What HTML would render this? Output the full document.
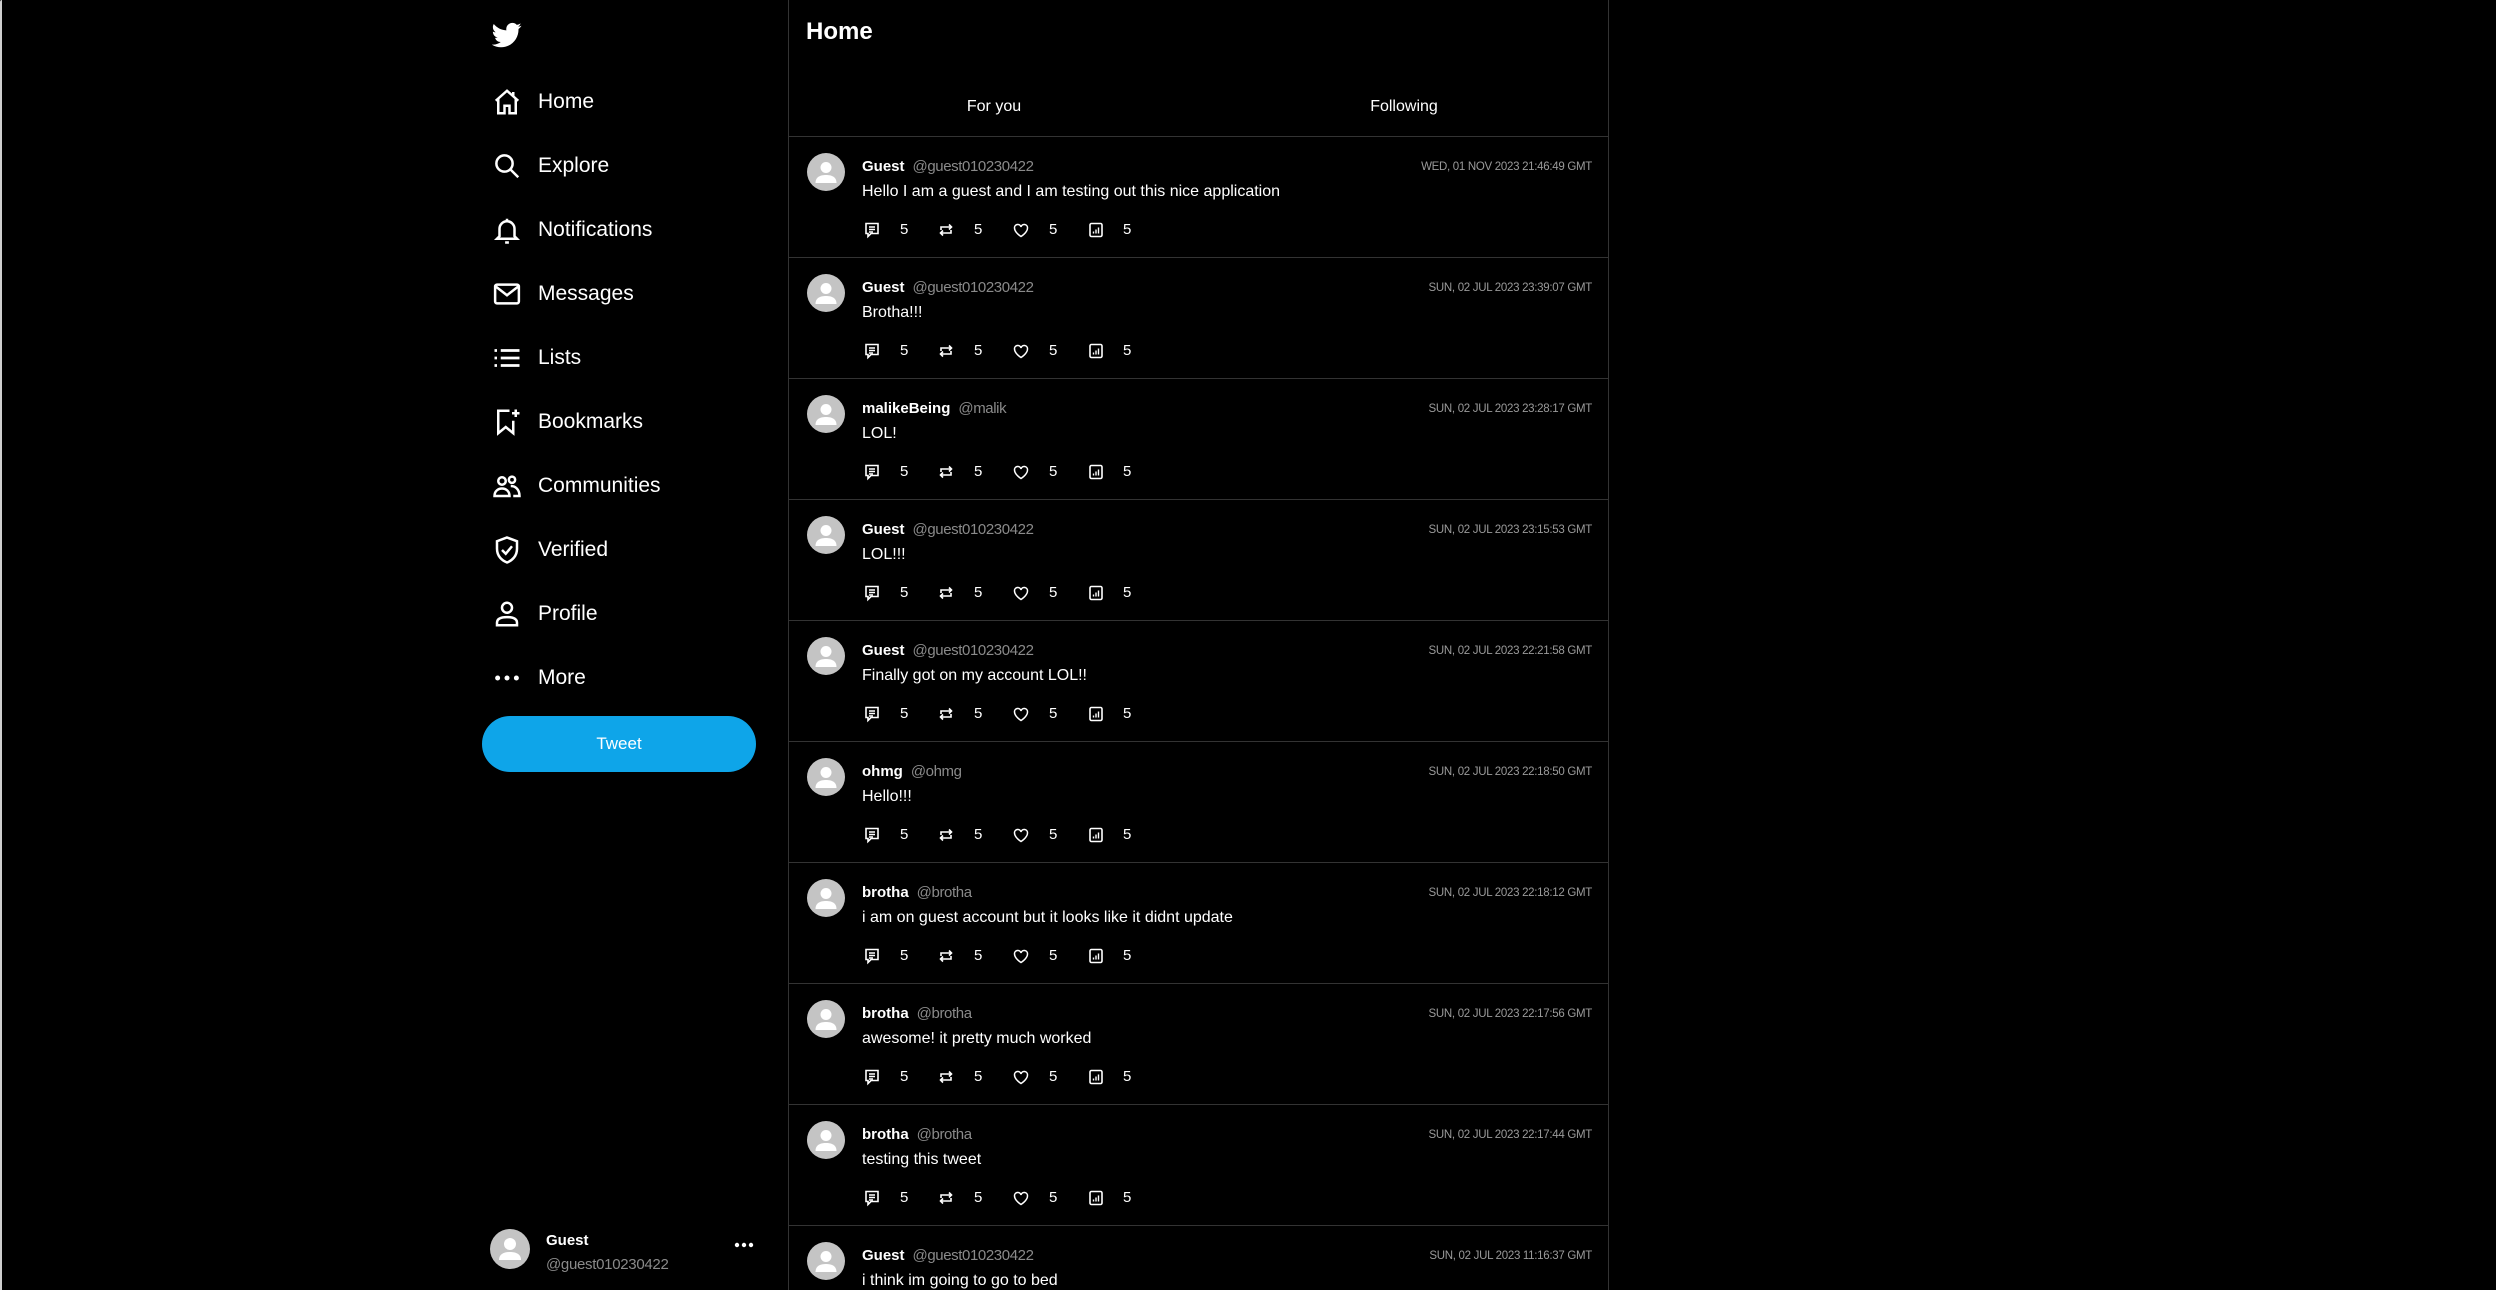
<!DOCTYPE html>
<html><head><meta charset="utf-8">
<style>
*{margin:0;padding:0;box-sizing:border-box}
html,body{width:2496px;height:1290px;background:#000;overflow:hidden;font-family:"Liberation Sans",sans-serif;color:#fff}
body{position:relative}
.edge{position:absolute;left:0;top:0;width:2px;height:1290px;background:#cfcfcf;border-top-left-radius:4px}
.side{position:absolute;left:0;top:0;width:788px;height:1290px}
.logo{position:absolute;left:492px;top:20px}
.nav{position:absolute;left:492px;top:2px}
.item{position:absolute;left:0;height:40px;display:flex;align-items:center;white-space:nowrap}
.item svg{width:30px;height:30px}
.item span{position:absolute;left:46px;font-size:21px}
.tbtn{position:absolute;left:482px;top:716px;width:274px;height:56px;border-radius:28px;background:#0ea5e9;color:#fff;font-size:17px;display:flex;align-items:center;justify-content:center}
.me{position:absolute;left:490px;top:1229px}
.av{border-radius:50%;background:#c4c4c4;position:absolute;overflow:hidden}
.feed{position:absolute;left:788px;top:0;width:821px;height:1290px;border-left:1px solid #333;border-right:1px solid #333;overflow:hidden}
.h{position:absolute;left:17px;top:18px;font-size:24px;font-weight:bold}
.tab{position:absolute;top:98px;font-size:16px;transform:translateX(-50%)}
.sep{position:absolute;left:0;width:100%;height:1px;background:#333}
.tw{position:absolute;left:0;width:100%;height:121px;border-bottom:1px solid #333}
.tw .av{left:18px;top:16px;width:38px;height:38px}
.nm{position:absolute;left:73px;top:21px;font-size:15px;white-space:nowrap}
.nm i{font-style:normal;color:#8a8a8a;margin-left:8px;letter-spacing:-.4px}
.ts{position:absolute;right:16px;top:24px;font-size:11.5px;color:#9a9a9a;letter-spacing:-.3px}
.tx{position:absolute;left:73px;top:46px;font-size:16px;white-space:nowrap}
.a{position:absolute;top:84px;font-size:15px;line-height:18px}
.ic{position:absolute;top:84px;width:18px;height:18px}
</style></head><body>
<div class="edge"></div>
<svg width="0" height="0" style="position:absolute">
<defs>
<g id="cm"><path d="M3 2.5h12v10H8l-3 3v-3H3z" fill="none" stroke="#fff" stroke-width="1.6"/><path d="M6 6h6M6 8.5h6M6 11h4" stroke="#fff" stroke-width="1.4"/></g>
<g id="rt" fill="none" stroke="#fff" stroke-width="1.6"><path d="M4 9V6h10M12 3.5l2.5 2.5L12 8.5M14 9v3H4M6 14.5L3.5 12 6 9.5"/></g>
<g id="ht"><path d="M9 15.5S2.5 11.5 2.5 7a3.3 3.3 0 0 1 6.5-1 3.3 3.3 0 0 1 6.5 1c0 4.5-6.5 8.5-6.5 8.5z" fill="none" stroke="#fff" stroke-width="1.5"/></g>
<g id="st"><rect x="3" y="2.5" width="12" height="13" rx="1.5" fill="none" stroke="#fff" stroke-width="1.6"/><path d="M6.5 12.5v-2M9 12.5v-4M11.5 12.5v-6" stroke="#fff" stroke-width="1.4"/></g>
<g id="pf"><circle cx="19" cy="14.5" r="5.5" fill="#fff"/><path d="M8.5 30c0-6 4.5-8 10.5-8s10.5 2 10.5 8z" fill="#fff"/></g>
</defs></svg>
<div class="side">
<svg class="logo" width="30" height="30" viewBox="0 0 24 24"><path fill="#fff" d="M23.6 4.6c-.9.4-1.8.6-2.8.8 1-.6 1.8-1.6 2.1-2.7-.9.6-2 1-3.1 1.2C19 2.9 17.7 2.3 16.3 2.3c-2.7 0-4.9 2.2-4.9 4.9 0 .4 0 .8.1 1.1C7.4 8.1 3.8 6.1 1.4 3.2c-.4.7-.7 1.6-.7 2.5 0 1.7.9 3.2 2.2 4.1-.8 0-1.6-.2-2.2-.6v.1c0 2.4 1.7 4.4 3.9 4.8-.4.1-.8.2-1.3.2-.3 0-.6 0-.9-.1.6 2 2.4 3.4 4.6 3.4-1.7 1.3-3.8 2.1-6.1 2.1-.4 0-.8 0-1.2-.1 2.2 1.4 4.8 2.2 7.5 2.2 9.1 0 14-7.5 14-14v-.6c1-.7 1.8-1.6 2.4-2.6z"/></svg>
<div class="nav">
<div class="item" style="top:80px"><svg viewBox="0 0 24 24" fill="none" stroke="#fff" stroke-width="2"><path d="M3 11L12 3l9 8M5 9.5V21h5v-6h4v6h5V9.5M17 4v3"/></svg><span>Home</span></div>
<div class="item" style="top:144px"><svg viewBox="0 0 24 24" fill="none" stroke="#fff" stroke-width="2"><circle cx="10" cy="10" r="6.5"/><path d="M15 15l6 6"/></svg><span>Explore</span></div>
<div class="item" style="top:208px"><svg viewBox="0 0 24 24" fill="none" stroke="#fff" stroke-width="2"><path d="M6 17V11a6 6 0 0 1 12 0v6l2 2H4zM12 3v2M10.5 22h3"/></svg><span>Notifications</span></div>
<div class="item" style="top:272px"><svg viewBox="0 0 24 24" fill="none" stroke="#fff" stroke-width="2"><rect x="2.5" y="4.5" width="19" height="15" rx="1.5"/><path d="M3 6l9 7 9-7"/></svg><span>Messages</span></div>
<div class="item" style="top:336px"><svg viewBox="0 0 24 24" fill="none" stroke="#fff" stroke-width="2.2"><path d="M2 6h2M2 12h2M2 18h2M7 6h15M7 12h15M7 18h15"/></svg><span>Lists</span></div>
<div class="item" style="top:400px"><svg viewBox="0 0 24 24" fill="none" stroke="#fff" stroke-width="2"><path d="M14 3H5v18l6-5 6 5V11M19 2v6M16 5h6"/></svg><span>Bookmarks</span></div>
<div class="item" style="top:464px"><svg viewBox="0 0 24 24" fill="none" stroke="#fff" stroke-width="2"><circle cx="8" cy="8" r="3"/><circle cx="16" cy="7" r="2.5"/><path d="M2 20c0-4 3-6 6-6s6 2 6 6zM15 12c4 0 7 3 7 8h-5"/></svg><span>Communities</span></div>
<div class="item" style="top:528px"><svg viewBox="0 0 24 24" fill="none" stroke="#fff" stroke-width="2"><path d="M12 2l8 3v6c0 6-4 9.5-8 11-4-1.5-8-5-8-11V5zM8 12l3 3 5-6"/></svg><span>Verified</span></div>
<div class="item" style="top:592px"><svg viewBox="0 0 24 24" fill="none" stroke="#fff" stroke-width="2"><circle cx="12" cy="7" r="4"/><path d="M4 21v-2c0-3 3-4.5 8-4.5s8 1.5 8 4.5v2z"/></svg><span>Profile</span></div>
<div class="item" style="top:656px"><svg viewBox="0 0 24 24" fill="#fff"><circle cx="4.5" cy="12" r="2"/><circle cx="12" cy="12" r="2"/><circle cx="19.5" cy="12" r="2"/></svg><span>More</span></div>
</div>
<div class="tbtn">Tweet</div>
<div class="me">
<div class="av" style="left:0;top:0;width:40px;height:40px"><svg width="40" height="40" viewBox="0 0 40 40"><circle cx="20" cy="15" r="6" fill="#fff"/><path d="M9 31c0-6 5-8 11-8s11 2 11 8z" fill="#fff"/></svg></div>
<div style="position:absolute;left:56px;top:3px;font-size:15px;font-weight:bold">Guest</div>
<div style="position:absolute;left:56px;top:27px;font-size:15px;color:#8a8a8a;letter-spacing:-.3px">@guest010230422</div>
<svg style="position:absolute;left:244px;top:12px" width="20" height="8" viewBox="0 0 20 8" fill="#fff"><circle cx="3" cy="4" r="2.2"/><circle cx="10" cy="4" r="2.2"/><circle cx="17" cy="4" r="2.2"/></svg>
</div>
</div>
<div class="feed">
<div class="h">Home</div>
<div class="tab" style="left:205px">For you</div>
<div class="tab" style="left:615px">Following</div>
<div class="sep" style="top:136px"></div>

<div class="tw" style="top:137px"><div class="av"><svg width="38" height="38" viewBox="0 0 38 38"><use href="#pf"/></svg></div><div class="nm"><b>Guest</b><i>@guest010230422</i></div><div class="ts">WED, 01 NOV 2023 21:46:49 GMT</div><div class="tx">Hello I am a guest and I am testing out this nice application</div><svg class="ic" style="left:74px" viewBox="0 0 18 18"><use href="#cm"/></svg><span class="a" style="left:111px">5</span><svg class="ic" style="left:148px" viewBox="0 0 18 18"><use href="#rt"/></svg><span class="a" style="left:185px">5</span><svg class="ic" style="left:223px" viewBox="0 0 18 18"><use href="#ht"/></svg><span class="a" style="left:260px">5</span><svg class="ic" style="left:298px" viewBox="0 0 18 18"><use href="#st"/></svg><span class="a" style="left:334px">5</span></div>

<div class="tw" style="top:258px"><div class="av"><svg width="38" height="38" viewBox="0 0 38 38"><use href="#pf"/></svg></div><div class="nm"><b>Guest</b><i>@guest010230422</i></div><div class="ts">SUN, 02 JUL 2023 23:39:07 GMT</div><div class="tx">Brotha!!!</div><svg class="ic" style="left:74px" viewBox="0 0 18 18"><use href="#cm"/></svg><span class="a" style="left:111px">5</span><svg class="ic" style="left:148px" viewBox="0 0 18 18"><use href="#rt"/></svg><span class="a" style="left:185px">5</span><svg class="ic" style="left:223px" viewBox="0 0 18 18"><use href="#ht"/></svg><span class="a" style="left:260px">5</span><svg class="ic" style="left:298px" viewBox="0 0 18 18"><use href="#st"/></svg><span class="a" style="left:334px">5</span></div>

<div class="tw" style="top:379px"><div class="av"><svg width="38" height="38" viewBox="0 0 38 38"><use href="#pf"/></svg></div><div class="nm"><b>malikeBeing</b><i>@malik</i></div><div class="ts">SUN, 02 JUL 2023 23:28:17 GMT</div><div class="tx">LOL!</div><svg class="ic" style="left:74px" viewBox="0 0 18 18"><use href="#cm"/></svg><span class="a" style="left:111px">5</span><svg class="ic" style="left:148px" viewBox="0 0 18 18"><use href="#rt"/></svg><span class="a" style="left:185px">5</span><svg class="ic" style="left:223px" viewBox="0 0 18 18"><use href="#ht"/></svg><span class="a" style="left:260px">5</span><svg class="ic" style="left:298px" viewBox="0 0 18 18"><use href="#st"/></svg><span class="a" style="left:334px">5</span></div>

<div class="tw" style="top:500px"><div class="av"><svg width="38" height="38" viewBox="0 0 38 38"><use href="#pf"/></svg></div><div class="nm"><b>Guest</b><i>@guest010230422</i></div><div class="ts">SUN, 02 JUL 2023 23:15:53 GMT</div><div class="tx">LOL!!!</div><svg class="ic" style="left:74px" viewBox="0 0 18 18"><use href="#cm"/></svg><span class="a" style="left:111px">5</span><svg class="ic" style="left:148px" viewBox="0 0 18 18"><use href="#rt"/></svg><span class="a" style="left:185px">5</span><svg class="ic" style="left:223px" viewBox="0 0 18 18"><use href="#ht"/></svg><span class="a" style="left:260px">5</span><svg class="ic" style="left:298px" viewBox="0 0 18 18"><use href="#st"/></svg><span class="a" style="left:334px">5</span></div>

<div class="tw" style="top:621px"><div class="av"><svg width="38" height="38" viewBox="0 0 38 38"><use href="#pf"/></svg></div><div class="nm"><b>Guest</b><i>@guest010230422</i></div><div class="ts">SUN, 02 JUL 2023 22:21:58 GMT</div><div class="tx">Finally got on my account LOL!!</div><svg class="ic" style="left:74px" viewBox="0 0 18 18"><use href="#cm"/></svg><span class="a" style="left:111px">5</span><svg class="ic" style="left:148px" viewBox="0 0 18 18"><use href="#rt"/></svg><span class="a" style="left:185px">5</span><svg class="ic" style="left:223px" viewBox="0 0 18 18"><use href="#ht"/></svg><span class="a" style="left:260px">5</span><svg class="ic" style="left:298px" viewBox="0 0 18 18"><use href="#st"/></svg><span class="a" style="left:334px">5</span></div>

<div class="tw" style="top:742px"><div class="av"><svg width="38" height="38" viewBox="0 0 38 38"><use href="#pf"/></svg></div><div class="nm"><b>ohmg</b><i>@ohmg</i></div><div class="ts">SUN, 02 JUL 2023 22:18:50 GMT</div><div class="tx">Hello!!!</div><svg class="ic" style="left:74px" viewBox="0 0 18 18"><use href="#cm"/></svg><span class="a" style="left:111px">5</span><svg class="ic" style="left:148px" viewBox="0 0 18 18"><use href="#rt"/></svg><span class="a" style="left:185px">5</span><svg class="ic" style="left:223px" viewBox="0 0 18 18"><use href="#ht"/></svg><span class="a" style="left:260px">5</span><svg class="ic" style="left:298px" viewBox="0 0 18 18"><use href="#st"/></svg><span class="a" style="left:334px">5</span></div>

<div class="tw" style="top:863px"><div class="av"><svg width="38" height="38" viewBox="0 0 38 38"><use href="#pf"/></svg></div><div class="nm"><b>brotha</b><i>@brotha</i></div><div class="ts">SUN, 02 JUL 2023 22:18:12 GMT</div><div class="tx">i am on guest account but it looks like it didnt update</div><svg class="ic" style="left:74px" viewBox="0 0 18 18"><use href="#cm"/></svg><span class="a" style="left:111px">5</span><svg class="ic" style="left:148px" viewBox="0 0 18 18"><use href="#rt"/></svg><span class="a" style="left:185px">5</span><svg class="ic" style="left:223px" viewBox="0 0 18 18"><use href="#ht"/></svg><span class="a" style="left:260px">5</span><svg class="ic" style="left:298px" viewBox="0 0 18 18"><use href="#st"/></svg><span class="a" style="left:334px">5</span></div>

<div class="tw" style="top:984px"><div class="av"><svg width="38" height="38" viewBox="0 0 38 38"><use href="#pf"/></svg></div><div class="nm"><b>brotha</b><i>@brotha</i></div><div class="ts">SUN, 02 JUL 2023 22:17:56 GMT</div><div class="tx">awesome! it pretty much worked</div><svg class="ic" style="left:74px" viewBox="0 0 18 18"><use href="#cm"/></svg><span class="a" style="left:111px">5</span><svg class="ic" style="left:148px" viewBox="0 0 18 18"><use href="#rt"/></svg><span class="a" style="left:185px">5</span><svg class="ic" style="left:223px" viewBox="0 0 18 18"><use href="#ht"/></svg><span class="a" style="left:260px">5</span><svg class="ic" style="left:298px" viewBox="0 0 18 18"><use href="#st"/></svg><span class="a" style="left:334px">5</span></div>

<div class="tw" style="top:1105px"><div class="av"><svg width="38" height="38" viewBox="0 0 38 38"><use href="#pf"/></svg></div><div class="nm"><b>brotha</b><i>@brotha</i></div><div class="ts">SUN, 02 JUL 2023 22:17:44 GMT</div><div class="tx">testing this tweet</div><svg class="ic" style="left:74px" viewBox="0 0 18 18"><use href="#cm"/></svg><span class="a" style="left:111px">5</span><svg class="ic" style="left:148px" viewBox="0 0 18 18"><use href="#rt"/></svg><span class="a" style="left:185px">5</span><svg class="ic" style="left:223px" viewBox="0 0 18 18"><use href="#ht"/></svg><span class="a" style="left:260px">5</span><svg class="ic" style="left:298px" viewBox="0 0 18 18"><use href="#st"/></svg><span class="a" style="left:334px">5</span></div>

<div class="tw" style="top:1226px"><div class="av"><svg width="38" height="38" viewBox="0 0 38 38"><use href="#pf"/></svg></div><div class="nm"><b>Guest</b><i>@guest010230422</i></div><div class="ts">SUN, 02 JUL 2023 11:16:37 GMT</div><div class="tx">i think im going to go to bed</div></div>
</div>
</body></html>
